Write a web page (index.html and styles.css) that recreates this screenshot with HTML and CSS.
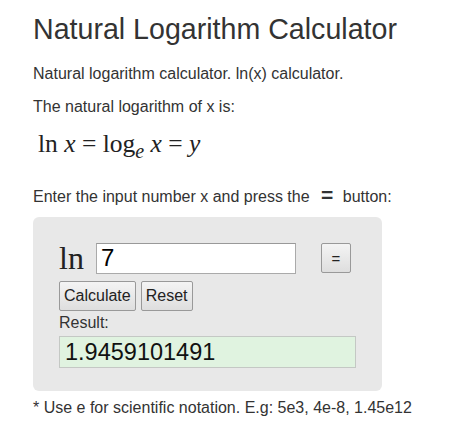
FILE: index.html
```html
<!DOCTYPE html>
<html>
<head>
<meta charset="utf-8">
<link rel="stylesheet" href="styles.css">
</head>
<body>
<div class="page">
  <h1 class="title">Natural Logarithm Calculator</h1>
  <p class="para">Natural logarithm calculator. ln(x) calculator.</p>
  <p class="para">The natural logarithm of x is:</p>
  <div class="formula">ln <i>x</i> = log<sub><i>e</i></sub> <i>x</i> = <i>y</i></div>
  <p class="para enter">Enter the input number x and press the <b class="eq">=</b> button:</p>
  <div class="box">
    <div class="row">
      <span class="ln">ln</span>
      <input class="inp" type="text" value="7">
      <button class="btn eqbtn">=</button>
    </div>
    <div class="row2">
      <button class="btn">Calculate</button>
      <button class="btn">Reset</button>
    </div>
    <div class="reslabel">Result:</div>
    <div class="result">1.9459101491</div>
  </div>
  <p class="para note">* Use e for scientific notation. E.g: 5e3, 4e-8, 1.45e12</p>
</div>
</body>
</html>
```
FILE: styles.css
```css
html, body { margin: 0; padding: 0; background: #fff; }
body { font-family: "Liberation Sans", Arial, sans-serif; color: #333; }
.page { padding: 12px 0 0 33px; }
.title { font-size: 28.6px; font-weight: normal; margin: 0 0 18px 0; line-height: 34px; }
.para { font-size: 16px; margin: 0 0 13px 0; line-height: 20px; }
.formula { font-family: "Liberation Serif", "Times New Roman", serif; font-size: 25.5px; margin: -3px 0 0 5px; line-height: 34px; color: #222; }
.formula sub { font-size: 20px; line-height: 0; vertical-align: -6px; }
.enter { margin-top: 24px; margin-bottom: 10px; }
.eq { font-size: 21px; margin: 0 5px 0 7px; font-weight: bold; }
.box { width: 349px; height: 174px; box-sizing: border-box; background: #e8e8e8; border-radius: 6px; padding: 25px 0 0 26px; }
.row { display: flex; align-items: center; height: 32px; }
.ln { font-family: "Liberation Serif", "Times New Roman", serif; font-size: 32px; color: #222; width: 37px; }
.inp { width: 200px; height: 31px; box-sizing: border-box; border: 1px solid #aaa; border-top-color: #999; background: #fff; font-family: "Liberation Sans", Arial, sans-serif; font-size: 24px; padding: 0 4px; color: #000; margin: 0; outline: none; }
.btn { font-family: "Liberation Sans", Arial, sans-serif; font-size: 16px; color: #222; background: linear-gradient(#f4f4f4, #dedede); border: 1px solid #999; border-radius: 2px; height: 30px; padding: 0 4px; margin: 0; }
.eqbtn { width: 30px; margin-left: 25px; font-size: 15px; }
.row2 { display: flex; gap: 5px; margin-top: 7px; }
.reslabel { font-size: 16px; margin-top: 2px; line-height: 19px; }
.result { width: 297px; height: 32px; box-sizing: border-box; margin-top: 4px; background: #e0f3e0; border: 1px solid #c4c8c4; font-size: 23.5px; line-height: 30px; padding-left: 5px; color: #111; }
.note { margin-top: 7px; }
```
